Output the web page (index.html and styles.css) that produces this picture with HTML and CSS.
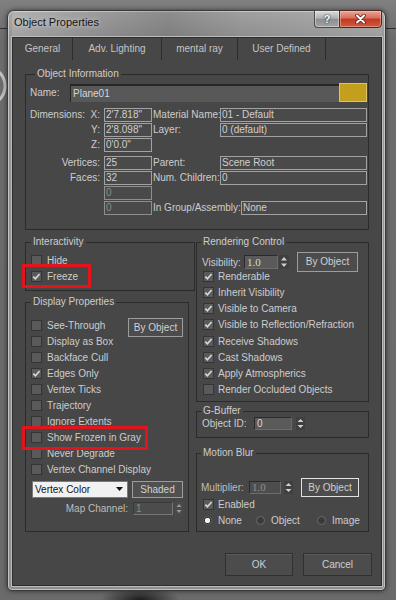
FILE: index.html
```html
<!DOCTYPE html>
<html>
<head>
<meta charset="utf-8">
<link rel="stylesheet" href="styles.css">
</head>
<body>
<div class="window">
  <div class="titlebar">
    <span class="title">Object Properties</span>
    <div class="caption">
      <span class="cap-help">?</span>
      <span class="cap-close"><svg width="11" height="10" viewBox="0 0 11 10"><path d="M2 1.5 L9 8.5 M9 1.5 L2 8.5" stroke="#5a2018" stroke-width="3.6" stroke-linecap="round"/><path d="M2 1.5 L9 8.5 M9 1.5 L2 8.5" stroke="#ffffff" stroke-width="2" stroke-linecap="round"/></svg></span>
    </div>
  </div>
  <div class="client">
    <div class="tabs">
      <span class="tab tab-general">General</span>
      <span class="tab tab-adv">Adv. Lighting</span>
      <span class="tab tab-mr">mental ray</span>
      <span class="tab tab-user">User Defined</span>
    </div>
    <div class="page">
      <div class="group objinfo">
        <div class="legend lg-info">Object Information</div>
        <div class="name-row">
          <span class="name-lbl">Name:</span>
          <span class="name-field">Plane01</span>
          <span class="swatch"></span>
        </div>
        <div class="info-grid">
          <span class="l1 dims"><span>Dimensions:</span><span>X:</span></span>
          <span class="field">2'7.818&quot;</span>
          <span class="l3">Material Name:</span>
          <span class="field">01 - Default</span>

          <span class="l1">Y:</span>
          <span class="field">2'8.098&quot;</span>
          <span class="l3">Layer:</span>
          <span class="field">0 (default)</span>

          <span class="l1">Z:</span>
          <span class="field">0'0.0&quot;</span>
          <span></span>
          <span></span>

          <span class="l1">Vertices:</span>
          <span class="field">25</span>
          <span class="l3">Parent:</span>
          <span class="field">Scene Root</span>

          <span class="l1">Faces:</span>
          <span class="field">32</span>
          <span class="l3">Num. Children:</span>
          <span class="field">0</span>

          <span></span>
          <span class="field dim">0</span>
          <span></span>
          <span></span>

          <span></span>
          <span class="field dim">0</span>
          <span class="asm"><span>In Group/Assembly:</span><span class="field asm-field">None</span></span>
        </div>
      </div>

      <div class="cols">
        <div class="col col-left">
          <div class="group inter">
            <div class="legend lg-inter">Interactivity</div>
            <div class="cb-row"><span class="cb"></span>Hide</div>
            <div class="cb-row freeze-row"><span class="cb"><svg width="9" height="9" viewBox="0 0 9 9"><path d="M1.3 4.6 L3.4 6.8 L7.6 2" stroke="#d6d6d6" stroke-width="1.7" fill="none"/></svg></span>Freeze<span class="hl hl1"></span></div>
          </div>

          <div class="group disp">
            <div class="legend lg-disp">Display Properties</div>
            <div class="dp-top">
              <div class="cb-list">
                <div class="cb-row dp"><span class="cb"></span>See-Through</div>
                <div class="cb-row dp"><span class="cb"></span>Display as Box</div>
                <div class="cb-row dp"><span class="cb"></span>Backface Cull</div>
                <div class="cb-row dp"><span class="cb"><svg width="9" height="9" viewBox="0 0 9 9"><path d="M1.3 4.6 L3.4 6.8 L7.6 2" stroke="#d6d6d6" stroke-width="1.7" fill="none"/></svg></span>Edges Only</div>
                <div class="cb-row dp"><span class="cb"></span>Vertex Ticks</div>
                <div class="cb-row dp"><span class="cb"></span>Trajectory</div>
                <div class="cb-row dp"><span class="cb"></span>Ignore Extents</div>
                <div class="cb-row dp frozen-row"><span class="cb"></span>Show Frozen in Gray<span class="hl hl2"></span></div>
                <div class="cb-row dp"><span class="cb"></span>Never Degrade</div>
                <div class="cb-row dp"><span class="cb"></span>Vertex Channel Display</div>
              </div>
              <span class="btn dp-byobj">By Object</span>
            </div>
            <div class="dd-row">
              <span class="dd">Vertex Color<svg width="7" height="4" viewBox="0 0 7 4"><path d="M0 0 H7 L3.5 4 Z" fill="#111"/></svg></span>
              <span class="btn shaded">Shaded</span>
            </div>
            <div class="map-row">
              <span class="map-lbl">Map Channel:</span>
              <span class="sp-in sp-map">1</span>
              <span class="sp-arr sp-arr-map"><svg width="8" height="13" viewBox="0 0 8 13"><path d="M1.5 5 L4 2 L6.5 5 Z M1.5 8 L4 11 L6.5 8 Z" fill="#9a9a9a"/></svg></span>
            </div>
          </div>
        </div>

        <div class="col col-right">
          <div class="group render">
            <div class="legend lg-right">Rendering Control</div>
            <div class="vis-row">
              <span class="vis-lbl">Visibility:</span>
              <span class="sp-in sp-vis">1.0</span>
              <span class="sp-arr sp-arr-vis"><svg width="10" height="14" viewBox="0 0 10 14"><path d="M2 5.5 L5 2 L8 5.5 Z M2 8.5 L5 12 L8 8.5 Z" fill="#d0d0d0"/></svg></span>
              <span class="btn vis-btn">By Object</span>
            </div>
            <div class="cb-row rc"><span class="cb"><svg width="9" height="9" viewBox="0 0 9 9"><path d="M1.3 4.6 L3.4 6.8 L7.6 2" stroke="#d6d6d6" stroke-width="1.7" fill="none"/></svg></span>Renderable</div>
            <div class="cb-row rc"><span class="cb"><svg width="9" height="9" viewBox="0 0 9 9"><path d="M1.3 4.6 L3.4 6.8 L7.6 2" stroke="#d6d6d6" stroke-width="1.7" fill="none"/></svg></span>Inherit Visibility</div>
            <div class="cb-row rc"><span class="cb"><svg width="9" height="9" viewBox="0 0 9 9"><path d="M1.3 4.6 L3.4 6.8 L7.6 2" stroke="#d6d6d6" stroke-width="1.7" fill="none"/></svg></span>Visible to Camera</div>
            <div class="cb-row rc"><span class="cb"><svg width="9" height="9" viewBox="0 0 9 9"><path d="M1.3 4.6 L3.4 6.8 L7.6 2" stroke="#d6d6d6" stroke-width="1.7" fill="none"/></svg></span>Visible to Reflection/Refraction</div>
            <div class="cb-row rc"><span class="cb"><svg width="9" height="9" viewBox="0 0 9 9"><path d="M1.3 4.6 L3.4 6.8 L7.6 2" stroke="#d6d6d6" stroke-width="1.7" fill="none"/></svg></span>Receive Shadows</div>
            <div class="cb-row rc"><span class="cb"><svg width="9" height="9" viewBox="0 0 9 9"><path d="M1.3 4.6 L3.4 6.8 L7.6 2" stroke="#d6d6d6" stroke-width="1.7" fill="none"/></svg></span>Cast Shadows</div>
            <div class="cb-row rc"><span class="cb"><svg width="9" height="9" viewBox="0 0 9 9"><path d="M1.3 4.6 L3.4 6.8 L7.6 2" stroke="#d6d6d6" stroke-width="1.7" fill="none"/></svg></span>Apply Atmospherics</div>
            <div class="cb-row rc"><span class="cb"></span>Render Occluded Objects</div>
          </div>

          <div class="group gbuf">
            <div class="legend lg-right lg-gbuf">G-Buffer</div>
            <div class="oid-row">
              <span class="oid-lbl">Object ID:</span>
              <span class="sp-in sp-oid">0</span>
              <span class="sp-arr sp-arr-oid"><svg width="9" height="13" viewBox="0 0 9 13"><path d="M1.5 5 L4.5 2 L7.5 5 Z M1.5 8 L4.5 11 L7.5 8 Z" fill="#cfcfcf"/></svg></span>
            </div>
          </div>

          <div class="group mblur">
            <div class="legend lg-right lg-mblur">Motion Blur</div>
            <div class="mult-row">
              <span class="mult-lbl">Multiplier:</span>
              <span class="sp-in sp-mult">1.0</span>
              <span class="sp-arr sp-arr-mult"><svg width="9" height="13" viewBox="0 0 9 13"><path d="M1.5 5 L4.5 2 L7.5 5 Z M1.5 8 L4.5 11 L7.5 8 Z" fill="#cfcfcf"/></svg></span>
              <span class="btn mb-btn">By Object</span>
            </div>
            <div class="cb-row en"><span class="cb"><svg width="9" height="9" viewBox="0 0 9 9"><path d="M1.3 4.6 L3.4 6.8 L7.6 2" stroke="#d6d6d6" stroke-width="1.7" fill="none"/></svg></span>Enabled</div>
            <div class="radio-row">
              <span class="ritem r-none"><span class="radio on"></span>None</span>
              <span class="ritem r-obj"><span class="radio"></span>Object</span>
              <span class="ritem"><span class="radio"></span>Image</span>
            </div>
          </div>
        </div>
      </div>

      <div class="footer">
        <span class="pbtn ok">OK</span>
        <span class="pbtn cancel">Cancel</span>
      </div>
    </div>
  </div>
</div>
</body>
</html>
```
FILE: styles.css
```css
* { box-sizing: border-box; }
html, body { margin: 0; }
body {
  width: 396px;
  height: 600px;
  overflow: hidden;
  padding: 10px 0 0 7px;
  background:
    linear-gradient(to bottom, transparent 28px, #2d2d2d 28px, #2d2d2d 29px, transparent 29px),
    radial-gradient(circle at -14px 86px, transparent 17px, #b8b8b8 18px, #c8c8c8 20px, transparent 21px),
    radial-gradient(ellipse 40px 14px at 140px 600px, #1c1c1c, transparent),
    linear-gradient(#808080, #6c6c6c 40px, #6a6a6a);
  font-family: "Liberation Sans", Arial, sans-serif;
  font-size: 10px;
  color: #cdcdcd;
}

.window {
  width: 379px;
  height: 581px;
  border: 1px solid #3a3a3a;
  border-radius: 7px 7px 5px 5px;
  background: linear-gradient(to bottom, #a8a8a8, #969696 26px, #8e8e8e);
  padding: 0 3px 4px 4px;
  display: flex;
  flex-direction: column;
  box-shadow: inset 0 0 0 1px rgba(255,255,255,0.45), 0 0 5px rgba(0,0,0,0.55);
}

.titlebar {
  height: 26px;
  flex: none;
  display: flex;
  justify-content: space-between;
  align-items: flex-start;
  background: linear-gradient(to right, rgba(255,255,255,0.12), rgba(0,0,0,0.05) 20%, rgba(0,0,0,0.16) 42%, rgba(0,0,0,0.05) 62%, rgba(255,255,255,0.08));
}
.title {
  padding: 5px 0 0 2px;
  font-size: 11px;
  line-height: 13px;
  color: #151515;
  text-shadow: 0 0 5px rgba(255,255,255,0.75);
}
.caption { display: flex; margin-top: -1px; }
.cap-help {
  width: 25px;
  height: 18px;
  border: 1px solid #4b4b4b;
  border-right: none;
  border-radius: 0 0 0 4px;
  background: linear-gradient(#dcdcdc, #b0b0b0 45%, #8f8f8f 52%, #a2a2a2);
  color: #ffffff;
  font-weight: bold;
  font-size: 11px;
  line-height: 16px;
  text-align: center;
  text-shadow: 0 0 2px #333, 0 0 1px #333;
  box-shadow: inset 0 0 0 1px rgba(255,255,255,0.4);
}
.cap-close {
  width: 43px;
  height: 18px;
  border: 1px solid #4e2a24;
  border-radius: 0 0 4px 0;
  background: linear-gradient(#eba696, #d8705c 42%, #c23a25 52%, #cf5a3e);
  display: flex;
  align-items: center;
  justify-content: center;
  box-shadow: inset 0 0 0 1px rgba(255,220,210,0.4);
}

.client {
  flex: 1;
  background: #474747;
  border: 1px solid #2e2e2e;
  box-shadow: 0 0 0 1px #bcbcbc;
  display: flex;
  flex-direction: column;
}

.tabs { display: flex; height: 22px; flex: none; }
.tab {
  border-right: 1px solid #2c2c2c;
  text-align: center;
  line-height: 22px;
  color: #c4c4c4;
}
.tab-general { width: 60px; }
.tab-adv { width: 89px; }
.tab-mr { width: 76px; }
.tab-user { width: 88px; }

.page {
  flex: 1;
  padding: 0 12px;
  display: flex;
  flex-direction: column;
}

.group { border: 1px solid #2b2b2b; }
.legend {
  display: table;
  height: 12px;
  line-height: 12px;
  padding: 0 2px;
  background: #474747;
  color: #cdcdcd;
  margin: -7px 0 0 5px;
}

/* Object information */
.objinfo { margin-top: 14px; padding: 0 1px 13px 4px; }
.lg-info { margin-bottom: 3px; }
.name-row { display: flex; height: 19px; }
.name-lbl { width: 40px; line-height: 19px; }
.name-field {
  width: 269px;
  height: 18px;
  margin-top: 1px;
  background: #585858;
  border-top: 2px solid #262626;
  border-left: 1px solid #262626;
  padding-left: 2px;
  line-height: 16px;
  color: #d6d6d6;
}
.swatch {
  width: 28px;
  height: 19px;
  background: #c49f1e;
  border: 1px solid #d9c46a;
}
.info-grid {
  display: grid;
  grid-template-columns: 74px 48px 68px 147px;
  grid-template-rows: 15px 15px 18px 15px 15px 15px 15px;
  margin-top: 6px;
}
.l1 { text-align: right; padding-right: 4px; line-height: 14px; }
.dims { display: flex; justify-content: space-between; }
.l3 { padding-left: 1px; line-height: 14px; white-space: nowrap; }
.field {
  height: 14px;
  border: 1px solid #a2a2a2;
  background: #4a4a4a;
  line-height: 12px;
  padding-left: 1px;
  color: #cfcfcf;
  white-space: nowrap;
  overflow: hidden;
}
.field.dim { color: #8c8c8c; border-color: #8e8e8e; }
.asm {
  grid-column: 3 / 5;
  display: flex;
  justify-content: space-between;
  line-height: 14px;
  padding-left: 1px;
}
.asm-field { width: 126px; }

/* columns */
.cols { display: flex; gap: 1px; margin-top: 12px; }
.col { display: flex; flex-direction: column; }
.col-left { width: 170px; }
.col-right { width: 173px; }

.cb-row { display: flex; align-items: center; white-space: nowrap; }
.cb {
  width: 11px;
  height: 11px;
  flex: none;
  border: 1px solid #343434;
  background: #5a5a5a;
  display: flex;
  align-items: center;
  justify-content: center;
}
.col-left .cb-row { padding-left: 5px; }
.col-left .cb { margin-right: 5px; }
.col-right .cb-row { padding-left: 6px; }
.col-right .cb { margin-right: 4px; }

.inter { padding-bottom: 6px; }
.lg-inter { margin-bottom: 4px; }
.inter .cb-row { height: 16px; }
.freeze-row, .frozen-row { position: relative; }
.hl {
  position: absolute;
  border: 3px solid #e3141b;
  pointer-events: none;
}
.hl1 { left: -4px; top: -4px; width: 69px; height: 24px; }
.hl2 { left: -4px; top: -4px; width: 126px; height: 24px; }

.disp { width: 164px; margin-top: 11px; padding-bottom: 16px; flex: 1; }
.lg-disp { margin-bottom: 9px; }
.dp-top { display: flex; }
.cb-list { flex: 1; min-width: 0; }
.cb-row.dp { height: 16.1px; }
.btn {
  flex: none;
  border: 1px solid #9c9c9c;
  background: #4c4c4c;
  color: #d0d0d0;
  text-align: center;
  white-space: nowrap;
}
.dp-byobj {
  width: 55px;
  height: 19px;
  line-height: 17px;
  margin: 1px 5px 0 0;
}
.dd-row { display: flex; padding-left: 6px; margin-top: 3px; }
.dd {
  width: 96px;
  height: 17px;
  background: #f1f1f1;
  border: 1px solid #7a7a7a;
  color: #111;
  display: flex;
  justify-content: space-between;
  align-items: center;
  padding: 0 4px 0 2px;
}
.shaded { width: 51px; height: 17px; line-height: 15px; margin-left: 4px; background: #505050; }
.map-row {
  display: flex;
  justify-content: flex-end;
  align-items: center;
  height: 13px;
  margin-top: 4px;
  padding-right: 5px;
}
.map-lbl { color: #bdbdbd; }
.sp-in {
  flex: none;
  height: 13px;
  border: 1px solid;
  border-color: #2a2a2a #6c6c6c #6c6c6c #2a2a2a;
  background: #5a5a5a;
  line-height: 11px;
  padding-left: 2px;
  color: #d8d8d8;
}
.sp-arr {
  flex: none;
  height: 13px;
  background: #3f3f3f;
  display: flex;
}
.sp-map { width: 40px; margin-left: 5px; background: #4c4c4c; color: #8a8a8a; border-color: #3a3a3a #777 #777 #3a3a3a; }
.sp-arr-map { width: 8px; margin-left: 2px; background: #4a4a4a; }

/* right column */
.render { padding-bottom: 3px; }
.lg-right { margin-left: 4px; }
.render .lg-right { margin-bottom: 4px; }
.vis-row {
  display: flex;
  align-items: center;
  height: 20px;
  margin-bottom: -4px;
  padding-left: 5px;
}
.vis-lbl { width: 42px; flex: none; }
.sp-vis { width: 34px; height: 14px; line-height: 12px; font-family: "Liberation Serif", serif; font-size: 11px; }
.sp-arr-vis { width: 10px; height: 14px; margin-left: 1px; }
.vis-btn { width: 61px; height: 20px; line-height: 18px; margin-left: 8px; }
.cb-row.rc { height: 16.25px; }

.gbuf { margin-top: 9px; padding-bottom: 7px; }
.oid-row { display: flex; align-items: center; height: 13px; padding-left: 5px; }
.oid-lbl { width: 52px; flex: none; }
.sp-oid { width: 38px; }
.sp-arr-oid { width: 9px; margin-left: 4px; }

.mblur { margin-top: 15px; padding-bottom: 3px; flex: 1; }
.lg-mblur { margin-bottom: 19px; }
.mult-row { display: flex; align-items: center; height: 19px; padding-left: 4px; }
.mult-lbl { width: 48px; flex: none; color: #bdbdbd; }
.sp-mult { width: 32px; background: #4d4d4d; color: #8e8e8e; font-family: "Liberation Serif", serif; font-size: 11px; }
.sp-arr-mult { width: 9px; margin-left: 3px; }
.mb-btn { width: 58px; height: 19px; line-height: 17px; margin-left: 8px; border-color: #e2e2e2; }
.cb-row.en { height: 15px; }
.radio-row { display: flex; align-items: center; height: 16px; padding-left: 6px; }
.ritem { display: flex; align-items: center; }
.r-none { width: 53px; }
.r-obj { width: 61px; }
.radio {
  width: 9px;
  height: 9px;
  flex: none;
  border-radius: 50%;
  margin-right: 6px;
  background: #3a3a3a;
  border: 1px solid #6a6a6a;
}
.radio.on {
  background: radial-gradient(circle, #f2f2f2 0 2.4px, #2e2e2e 3px);
  border-color: #5a5a5a;
}

/* footer */
.footer {
  display: flex;
  justify-content: flex-end;
  gap: 10px;
  margin: 21px -3px 0 0;
}
.pbtn {
  height: 23px;
  background: #4c4c4c;
  border: 1px solid #303030;
  box-shadow: inset 0 1px 0 #5a5a5a;
  color: #cfcfcf;
  text-align: center;
  line-height: 21px;
}
.ok { width: 68px; }
.cancel { width: 69px; }
```
